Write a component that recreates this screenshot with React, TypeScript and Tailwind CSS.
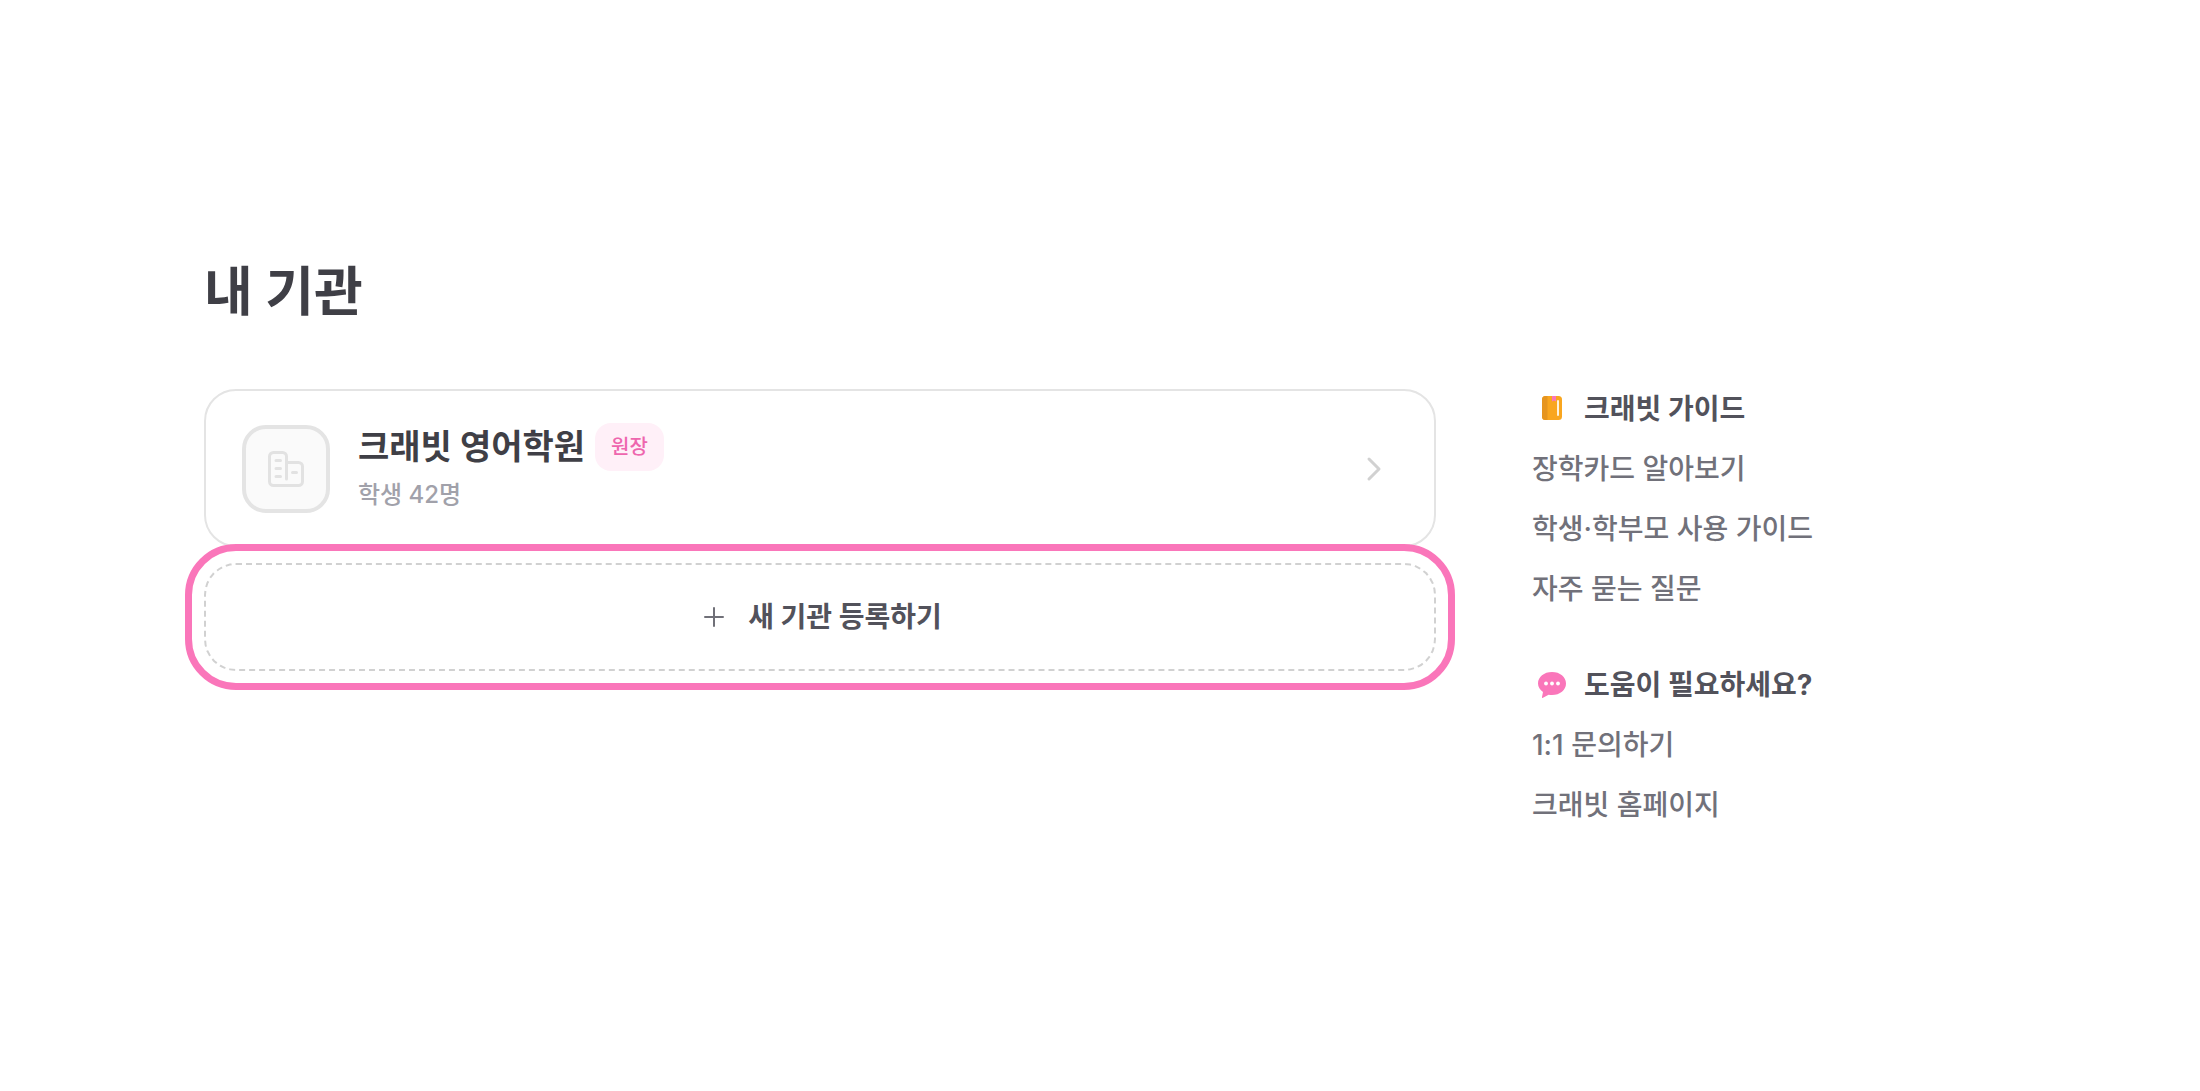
import type { ReactNode } from 'react';

type LinkGroup = {
  title: string;
  icon: ReactNode;
  links: string[];
};

function BuildingIcon() {
  return (
    <svg viewBox="0 0 36 36" className="h-9 w-9" fill="none" stroke="#e2e2e2" strokeWidth="3" strokeLinecap="round" strokeLinejoin="round" aria-hidden="true">
      <path d="M18.5 28V5.5a4 4 0 0 0-4-4h-9a4 4 0 0 0-4 4v25a4 4 0 0 0 4 4h25a4 4 0 0 0 4-4v-15a4 4 0 0 0-4-4h-12" />
      <path d="M8 9.5h4.5M8 17.5h4.5M8 25.5h4.5M24.5 21.5h4" />
    </svg>
  );
}

function ChevronIcon() {
  return (
    <svg viewBox="0 0 48 48" className="h-12 w-12 shrink-0" fill="none" stroke="#d1d1d1" strokeWidth="3" strokeLinecap="round" strokeLinejoin="round" aria-hidden="true">
      <path d="M19 14l10 10-10 10" />
    </svg>
  );
}

function PlusIcon() {
  return (
    <svg viewBox="0 0 40 40" className="h-10 w-10" fill="none" stroke="#707078" strokeWidth="2" strokeLinecap="round" aria-hidden="true">
      <path d="M20 11v18M11 20h18" />
    </svg>
  );
}

function BookIcon() {
  return (
    <svg viewBox="0 0 40 40" className="h-10 w-10" aria-hidden="true">
      <rect x="10" y="7" width="20" height="24" rx="3.5" fill="#f9a61f" />
      <path d="M13.5 7h2v24h-2a3.5 3.5 0 0 1-3.5-3.5v-17A3.5 3.5 0 0 1 13.5 7z" fill="#e6951f" />
      <path d="M20 7h4v5.5l-2-1-2 1z" fill="#fa76ba" />
      <rect x="25" y="11" width="2" height="16" rx="1" fill="#fff3dc" />
    </svg>
  );
}

function ChatIcon() {
  return (
    <svg viewBox="0 0 40 40" className="h-10 w-10" aria-hidden="true">
      <path d="M20 7c8 0 14 4.9 14 11.5S28 30 20 30c-1.200 0-2.300-.1-3.400-.3L11 32.800c-.7.400-1.200.1-1-.7l1-5.100C8 25 6 22 6 18.500 6 11.900 12 7 20 7z" fill="#fa76ba" />
      <circle cx="14" cy="18.5" r="1.9" fill="#fff" />
      <circle cx="20" cy="18.5" r="1.9" fill="#fff" />
      <circle cx="26" cy="18.5" r="1.9" fill="#fff" />
    </svg>
  );
}

const groups: LinkGroup[] = [
  {
    title: '크래빗 가이드',
    icon: <BookIcon />,
    links: ['장학카드 알아보기', '학생·학부모 사용 가이드', '자주 묻는 질문'],
  },
  {
    title: '도움이 필요하세요?',
    icon: <ChatIcon />,
    links: ['1:1 문의하기', '크래빗 홈페이지'],
  },
];

export default function App() {
  return (
    <div className="min-h-screen bg-white px-8 pt-65 pb-16 font-['Inter','Noto_Sans_CJK_KR',sans-serif] text-[#3f3f46]">
      <div className="mx-auto max-w-[1792px]">
        <h1 className="mb-[65px] text-[53px] leading-16 font-bold">내 기관</h1>

        <div className="flex items-start gap-24">
          <main className="flex min-w-0 flex-1 flex-col gap-4">
            {/* Institution */}
            <a href="#academy" className="flex items-center rounded-[32px] border-2 border-[#e4e4e4] px-9 pt-8 pb-[30px]">
              <span className="flex h-22 w-22 shrink-0 items-center justify-center rounded-3xl border-4 border-[#e4e4e4] bg-[#fafafa]">
                <BuildingIcon />
              </span>
              <span className="ml-7 flex min-w-0 flex-1 flex-col gap-1">
                <span className="flex items-center gap-2.5">
                  <span className="text-[34px] leading-12 font-bold">크래빗 영어학원</span>
                  <span className="rounded-2xl bg-[#fff0f8] px-4 text-xl leading-12 font-medium text-[#ee66ae]">원장</span>
                </span>
                <span className="text-2xl leading-10 font-medium text-[#a1a1aa]">학생 42명</span>
              </span>
              <ChevronIcon />
            </a>

            {/* Register */}
            <button
              type="button"
              className="flex h-27 cursor-pointer items-center justify-center gap-3.5 rounded-[32px] border-2 border-dashed border-[#d1d1d1] pr-1 text-[28px] leading-10 font-bold text-[#52525b] outline-[7px] outline-offset-12 outline-[#fa76ba]"
            >
              <PlusIcon />
              새 기관 등록하기
            </button>
          </main>

          <aside className="flex w-[464px] shrink-0 flex-col gap-14 text-[28px] leading-10">
            {groups.map((group) => (
              <nav key={group.title} aria-label={group.title} className="flex flex-col gap-5">
                <h2 className="flex items-center gap-3 font-bold text-[#52525b]">
                  {group.icon}
                  {group.title}
                </h2>
                {group.links.map((link) => (
                  <a key={link} href="#guide" className="font-medium text-[#71717a]">
                    {link}
                  </a>
                ))}
              </nav>
            ))}
          </aside>
        </div>
      </div>
    </div>
  );
}
